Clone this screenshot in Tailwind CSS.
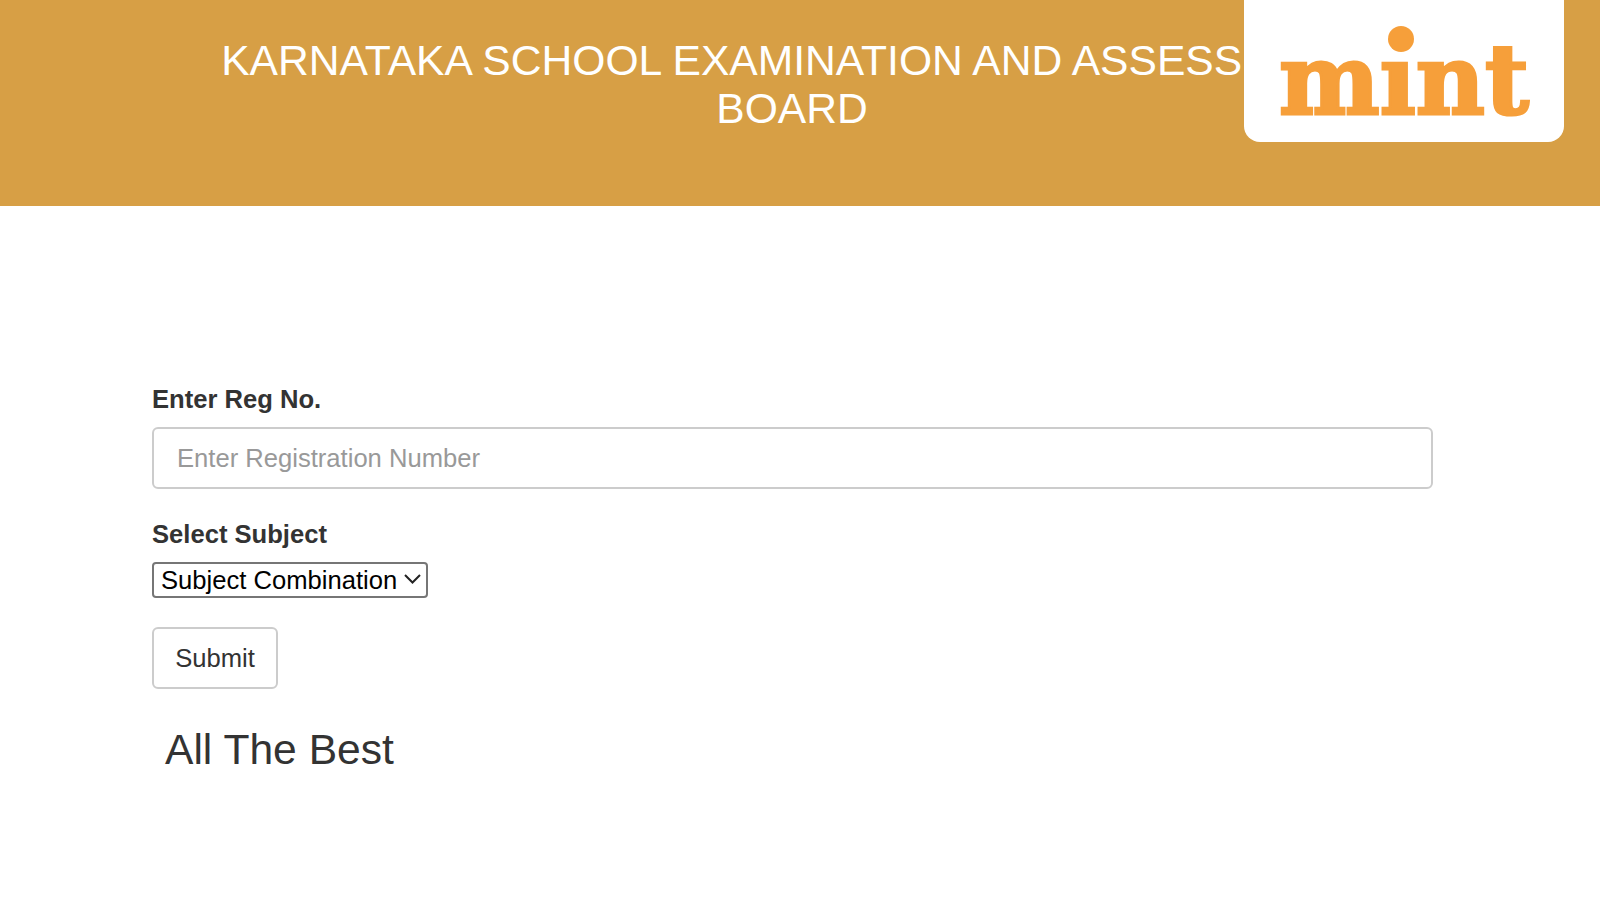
<!DOCTYPE html>
<html lang="en">
<head>
  <meta charset="UTF-8" />
  <meta name="viewport" content="width=device-width, initial-scale=1.0" />
  <title>Karnataka School Examination and Assessment Board</title>
  <script src="https://cdn.jsdelivr.net/npm/@tailwindcss/browser@4"></script>
</head>
<body class="bg-white font-['Liberation_Sans',Arial,sans-serif] text-[#333] overflow-hidden">
  <header class="relative h-[206px] bg-[#d79f45] overflow-hidden">
    <h1 class="w-[1280px] ml-[152px] pt-[36px] text-center text-white text-[42.6px] leading-[48px]">KARNATAKA SCHOOL EXAMINATION AND ASSESSMENT BOARD</h1>
    <div class="absolute left-[1244px] top-0 w-[320px] h-[142px] bg-white rounded-b-[16px]">
      <svg class="w-full h-full" viewBox="0 0 320 142" role="img" aria-label="mint">
        <circle cx="157" cy="39" r="13" fill="#f69f3a" />
        <text x="35" y="114" textLength="250" lengthAdjust="spacingAndGlyphs" font-family="DejaVu Serif" font-weight="700" font-size="98" fill="#f69f3a" stroke="#f69f3a" stroke-width="3">mınt</text>
      </svg>
    </div>
  </header>

  <form class="w-[1281px] ml-[152px] pt-[177px]">
    <label class="block font-bold text-[25.6px] leading-[32px]">Enter Reg No.</label>
    <input type="text" placeholder="Enter Registration Number" class="block w-full h-[62px] mt-[12px] px-[23px] border-2 border-[#ccc] rounded-[6px] text-[25.6px] text-[#555] placeholder:text-[#999]" />
    <label class="block mt-[29px] font-bold text-[25.6px] leading-[32px]">Select Subject</label>
    <div class="relative w-[276px] h-[36px] mt-[12px] border-2 border-[#767676] rounded-[4px] text-black">
      <span class="block pl-[7px] text-[25.6px] leading-[32px] whitespace-nowrap">Subject Combination</span>
      <svg class="absolute right-[5px] top-[9px] w-[17px] h-[12px]" viewBox="0 0 17 12" fill="none" stroke="#222" stroke-width="2"><path d="M1 2l7.5 7.5L16 2" /></svg>
    </div>
    <button type="button" class="block w-[126px] h-[62px] mt-[29px] border-2 border-[#ccc] rounded-[6px] bg-white text-[25.6px] text-[#333]">Submit</button>
    <p class="ml-[13px] mt-[32px] text-[42.6px] leading-[56px]">All The Best</p>
  </form>
</body>
</html>
